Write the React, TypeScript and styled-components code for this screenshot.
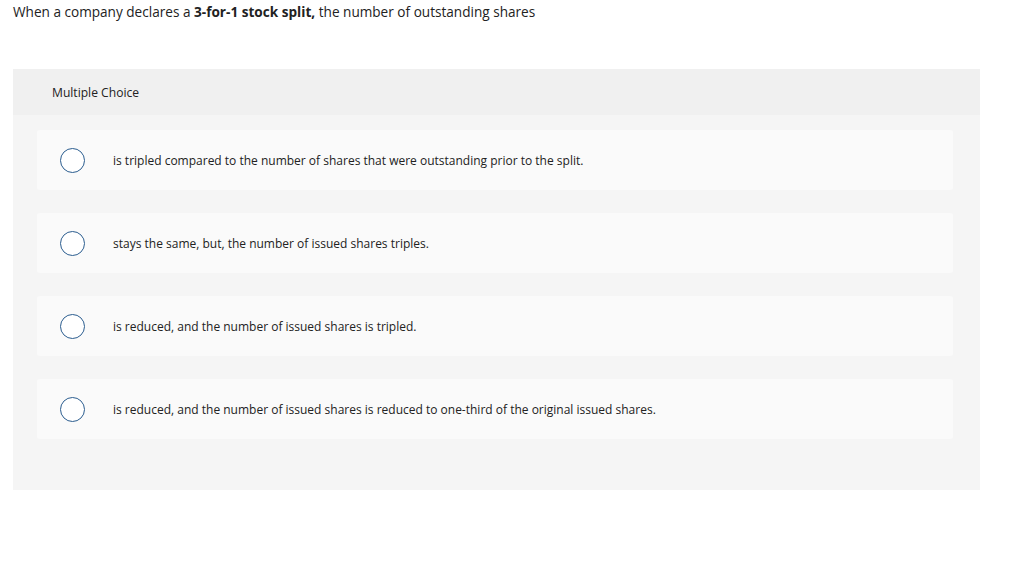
import styled, { createGlobalStyle } from 'styled-components';

const GlobalStyle = createGlobalStyle`
  body {
    margin: 0;
    background: #fff;
    font-family: 'Open Sans', 'Liberation Sans', sans-serif;
    color: #222;
  }
`;

const Page = styled.div`
  padding: 3px 44px 0 13px;
`;

const Question = styled.p`
  margin: 0;
  font-size: 13.6px;
  line-height: 18px;
  color: #222;
  b {
    font-weight: 700;
  }
`;

const Panel = styled.section`
  margin-top: 48px;
  width: 967px;
  background: #f5f5f5;
  padding-bottom: 51px;
`;

const PanelHeader = styled.div`
  height: 46px;
  display: flex;
  align-items: center;
  padding-left: 39px;
  background: #f0f0f0;
  font-size: 12.1px;
  color: #222;
`;

const OptionList = styled.div`
  display: flex;
  flex-direction: column;
  gap: 23px;
  padding: 15px 27px 0 24px;
`;

const Option = styled.label`
  height: 60px;
  display: flex;
  align-items: center;
  background: #fafafa;
  border-radius: 3px;
  cursor: pointer;
`;

const Radio = styled.span`
  width: 23px;
  height: 23px;
  margin-left: 23px;
  border: 1.5px solid #2b5d8f;
  border-radius: 50%;
  background: #fff;
  flex-shrink: 0;
`;

const OptionText = styled.span`
  margin-left: 28px;
  font-size: 12px;
  color: #222;
`;

const options = [
  'is tripled compared to the number of shares that were outstanding prior to the split.',
  'stays the same, but, the number of issued shares triples.',
  'is reduced, and the number of issued shares is tripled.',
  'is reduced, and the number of issued shares is reduced to one-third of the original issued shares.',
];

const App = () => {
  return (
    <>
      <GlobalStyle />
      <Page>
        <Question>
          When a company declares a <b>3-for-1 stock split,</b> the number of outstanding shares
        </Question>
        <Panel>
          <PanelHeader>Multiple Choice</PanelHeader>
          <OptionList>
            {options.map((text) => (
              <Option key={text}>
                <Radio />
                <OptionText>{text}</OptionText>
              </Option>
            ))}
          </OptionList>
        </Panel>
      </Page>
    </>
  );
};

export default App;
